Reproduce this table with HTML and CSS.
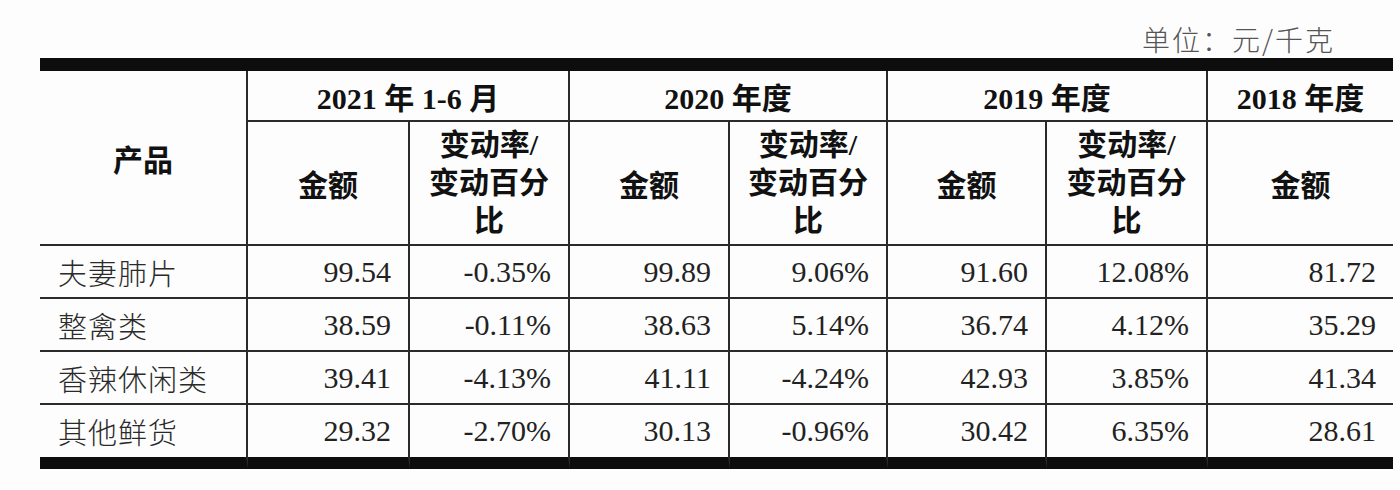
FILE: index.html
```html
<!DOCTYPE html>
<html lang="zh">
<head>
<meta charset="utf-8">
<title>单位价格</title>
<link rel="stylesheet" href="styles.css">
</head>
<body>
<div class="page">
  <div class="unit">单位：元/千克</div>
  <table class="data">
    <colgroup>
      <col class="c-name">
      <col class="c1"><col class="c2">
      <col class="c3"><col class="c4">
      <col class="c5"><col class="c6">
      <col class="c7">
    </colgroup>
    <thead>
      <tr class="h1">
        <th rowspan="2" class="name-h">产品</th>
        <th colspan="2">2021 年 1-6 月</th>
        <th colspan="2">2020 年度</th>
        <th colspan="2">2019 年度</th>
        <th class="last">2018 年度</th>
      </tr>
      <tr class="h2">
        <th>金额</th>
        <th class="rate">变动率/<br>变动百分<br>比</th>
        <th>金额</th>
        <th class="rate">变动率/<br>变动百分<br>比</th>
        <th>金额</th>
        <th class="rate">变动率/<br>变动百分<br>比</th>
        <th class="last">金额</th>
      </tr>
    </thead>
    <tbody>
      <tr>
        <td class="name">夫妻肺片</td>
        <td>99.54</td><td>-0.35%</td>
        <td>99.89</td><td>9.06%</td>
        <td>91.60</td><td>12.08%</td>
        <td class="last">81.72</td>
      </tr>
      <tr>
        <td class="name">整禽类</td>
        <td>38.59</td><td>-0.11%</td>
        <td>38.63</td><td>5.14%</td>
        <td>36.74</td><td>4.12%</td>
        <td class="last">35.29</td>
      </tr>
      <tr>
        <td class="name">香辣休闲类</td>
        <td>39.41</td><td>-4.13%</td>
        <td>41.11</td><td>-4.24%</td>
        <td>42.93</td><td>3.85%</td>
        <td class="last">41.34</td>
      </tr>
      <tr class="end">
        <td class="name">其他鲜货</td>
        <td>29.32</td><td>-2.70%</td>
        <td>30.13</td><td>-0.96%</td>
        <td>30.42</td><td>6.35%</td>
        <td class="last">28.61</td>
      </tr>
    </tbody>
  </table>
</div>
</body>
</html>
```

FILE: styles.css
```css
html, body {
  margin: 0;
  padding: 0;
  background: #fdfdfd;
}

.page {
  width: 1353px;
  padding-left: 40px;
  font-family: "Liberation Serif", "Noto Sans CJK SC", serif;
  color: #1a1a1a;
}

.unit {
  height: 58px;
  box-sizing: border-box;
  padding-top: 20px;
  padding-right: 58px;
  line-height: 38px;
  text-align: right;
  font-family: "Noto Sans CJK SC", sans-serif;
  font-size: 28px;
  letter-spacing: 2px;
  color: #555;
  font-weight: 300;
}

.data {
  width: 1353px;
  table-layout: fixed;
  border-collapse: separate;
  border-spacing: 0;
  border-top: 13px solid #0d0d0d;
}

.c-name { width: 208px; }
.c1 { width: 162px; }
.c2 { width: 160px; }
.c3 { width: 160px; }
.c4 { width: 158px; }
.c5 { width: 159px; }
.c6 { width: 161px; }
.c7 { width: 185px; }

.data th,
.data td {
  box-sizing: border-box;
  padding: 0;
  border-right: 2px solid #2a2a2a;
  border-bottom: 2px solid #2a2a2a;
}

.data th.last,
.data td.last {
  border-right: none;
}

.data th {
  font-weight: bold;
  font-size: 30px;
  text-align: center;
  color: #111;
}

.h1 th {
  height: 51px;
}

.h2 th {
  height: 124px;
}

.rate {
  line-height: 38px;
  padding-top: 4px;
}

.name-h {
  padding-top: 0;
}

.data td {
  height: 53px;
  font-size: 30px;
  text-align: right;
  padding-right: 17px;
  color: #222;
}

.data td.name {
  text-align: left;
  padding-left: 18px;
  padding-right: 0;
  font-family: "Noto Sans CJK SC", sans-serif;
  font-size: 29px;
  letter-spacing: 1px;
  font-weight: 300;
  color: #2a2a2a;
}

.end td {
  border-bottom: 12px solid #0d0d0d;
  height: 64px;
}
```
